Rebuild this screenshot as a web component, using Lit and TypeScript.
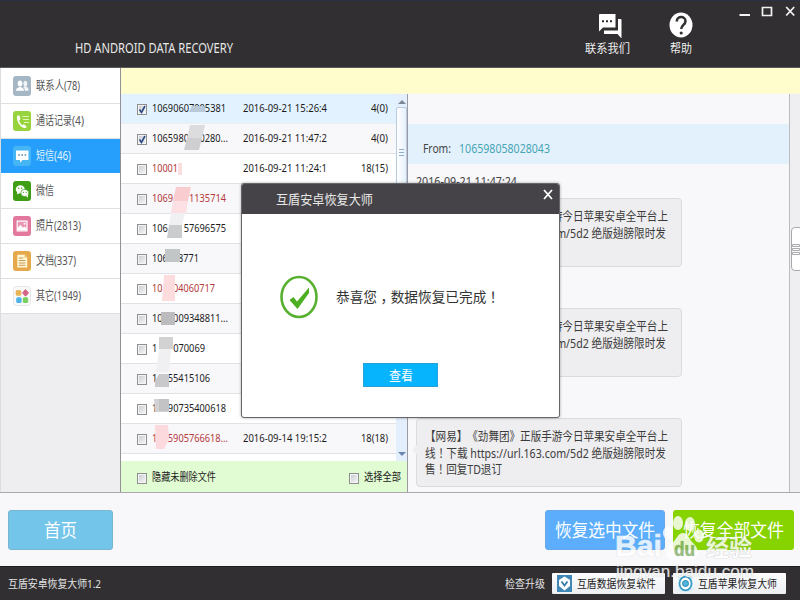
import { LitElement, html, svg, css } from "lit";
import { customElement, property } from "lit/decorators.js";
import { classMap } from "lit/directives/class-map.js";

/** One line of text condensed or widened to a given width. */
@customElement("fit-text")
class FitText extends LitElement {
  @property({ type: Number }) w = 0;
  @property() text = "";
  static styles = css`
    :host { display: inline-block; flex: none; white-space: pre; overflow: visible; text-spacing-trim: space-all; }
    .run { display: inline-block; transform-origin: 0 50%; }
    .mid { font-family: "Noto Sans CJK TC", sans-serif; line-height: 1; }
    .comma { position: relative; left: .25em; line-height: 1; }
  `;
  updated() {
    const s = this.renderRoot.querySelector(".run") as HTMLElement;
    s.style.transform = "none";
    const n = s.getBoundingClientRect().width;
    this.style.width = this.w + "px";
    if (n) s.style.transform = `scaleX(${this.w / n})`;
  }
  part1(p: string) {
    if (p === "！") return html`<span class="mid" lang="zh-TW">${p}</span>`;
    if (p === "，") return html`<span class="comma">${p}</span>`;
    return p;
  }
  render() {
    return html`<span class="run">${this.text.split(/([，！])/).map(p => this.part1(p))}</span>`;
  }
}

const t = (text: string, w: number, cls = "") => html`<fit-text class=${cls} .text=${text} .w=${w}></fit-text>`;

const G = "\u2007";
const rows: { n: string; w: number; on?: boolean; red?: boolean; date?: string; count?: string; cw?: number }[] = [
  { n: "10690607005381", w: 74, on: true, date: "2016-09-21 15:26:4", count: "4(0)", cw: 17 },
  { n: "1065980" + G + G + "0280...", w: 76, on: true, date: "2016-09-21 11:47:2", count: "4(0)", cw: 17 },
  { n: "10001", w: 26, red: true, date: "2016-09-21 11:24:1", count: "18(15)", cw: 27 },
  { n: "1069" + G + G + G + "1135714", w: 74, red: true },
  { n: "106" + G + G + G + "57696575", w: 74 },
  { n: "106" + G + G + "8771", w: 47 },
  { n: "10" + G + G + "04060717", w: 63, red: true },
  { n: "10" + G + G + "009348811...", w: 76 },
  { n: "1" + G + G + G + "070069", w: 53 },
  { n: "1" + G + G + "55415106", w: 58 },
  { n: "1" + G + G + "90735400618", w: 74 },
  { n: "1" + G + G + "5905766618...", w: 76, red: true, date: "2016-09-14 19:15:2", count: "18(18)", cw: 27 },
];

const icons = [
  svg`<rect width="18" height="20" rx="3" fill="#a5b6c5"/><g fill="#fff"><ellipse cx="7" cy="7.600" rx="2.300" ry="3"/><path d="M3 14.800c0-3 2-2.600 3.200-3.900h1.800c1.200 1.300 3 .9 3 3.900z"/><ellipse cx="12.300" cy="7.400" rx="2" ry="2.700" opacity=".85"/><path d="M11.800 14.800c0-2-.6-2.900-1.600-3.500l1.100-1h1.900c.9 1.300 2.500 1 2.500 4.500z" opacity=".85"/></g>`,
  svg`<rect width="18" height="20" rx="3" fill="#97d33c"/><path d="M4.300 4.500c-1.600 3.500 1.700 11 6.800 12.600 1.600.2 2.600-1 2.500-1.700l-2.800-2.200-1.600 1c-1.500-.8-2.800-3.300-3-5l1.300-1-1-3.700z" fill="#fff"/><path d="M9 5.500h7M10 8.500h6M11 11.500h5" stroke="#e3f6b8" stroke-width="1.200"/>`,
  svg`<rect width="18" height="20" rx="3" fill="#45b5f3"/><path d="M3 4.500h12.500v9.500H9.500L7 16.800V14H3z" fill="#fff"/><path d="M5.300 9h1.600M8.400 9H10M11.600 9h1.600" stroke="#5b8fb4" stroke-width="1.600"/>`,
  svg`<rect width="18" height="20" rx="3" fill="#3f9d16"/><ellipse cx="7.300" cy="8.300" rx="4.500" ry="4" fill="#fff"/><path d="M4.500 11l-.6 2.500 3-1.500z" fill="#fff"/><ellipse cx="11.800" cy="12" rx="4" ry="3.600" fill="#fff" stroke="#3f9d16" stroke-width=".7"/><path d="M13 15l2 1.700v-3z" fill="#fff"/><g fill="#3f9d16"><circle cx="5.700" cy="7.300" r=".7"/><circle cx="8.700" cy="7.300" r=".7"/><circle cx="10.500" cy="11.300" r=".6"/><circle cx="13.200" cy="11.300" r=".6"/></g>`,
  svg`<rect width="18" height="20" rx="3" fill="#e2789d"/><path d="M4.200 5.200h9.800v9.800H4.200z" fill="#e993b1" stroke="#fff" stroke-width="1.200"/><path d="M4.500 14.500V12l3-3.200 2.500 3 1.500-1.200 2.300 2v2z" fill="#fff"/><circle cx="11.500" cy="7.700" r="1" fill="#fff"/>`,
  svg`<rect width="18" height="20" rx="3" fill="#e5a94c"/><path d="M4.300 3.800h7.500l2.400 2.600v10.100H4.300z" fill="#fff6d5"/><path d="M11.500 3.800v3h2.700z" fill="#e8c06e"/><path d="M5.800 7h4.500M5.800 9.500h6.500M5.800 12h6.500M5.800 14.300h6.500" stroke="#c29a55"/>`,
  svg`<rect x=".5" y=".5" width="17" height="19" rx="3" fill="#fafafa" stroke="#e6e6e8"/><rect x="2.700" y="4" width="5.600" height="5.800" rx="1.500" fill="#e9b45a"/><path d="M12.500 3.600l3 3.300-3 3.300-3-3.300z" fill="#d56582" stroke="#d56582" stroke-linejoin="round"/><rect x="3.200" y="11.200" width="5.400" height="5.800" rx="1.500" fill="#4fb3e6"/><rect x="9.800" y="11.200" width="5.400" height="5.800" rx="1.500" fill="#79cf60"/>`,
];
const menu: [string, number, string, number][] = [
  ["联系人", 28, "(78)", 16], ["通话记录", 36, "(4)", 12], ["短信", 18, "(46)", 17], ["微信", 18, "", 0],
  ["照片", 18, "(2813)", 27], ["文档", 18, "(337)", 22], ["其它", 18, "(1949)", 27],
];

@customElement("app-root")
class AppRoot extends LitElement {
  static styles = css`
    :host { display: flex; flex-direction: column; position: relative; width: 800px; height: 600px; overflow: hidden; background: #f8f7fa;
      font-family: "Noto Sans", "Noto Sans CJK SC", sans-serif; font-size: 11px; line-height: 16px; color: #222; }
    * { box-sizing: border-box; }
    svg { display: block; flex: none; }
    header { height: 68px; flex: none; background: #312f31; border-top: 1px solid #273345; border-bottom: 1px solid #5a595b; display: flex; color: #eee; }
    .brand { margin: 38px 0 0 75px; font-size: 13.500px; line-height: 18px; color: #e8e8e8; width: 509px; }
    .tool { display: flex; flex-direction: column; align-items: center; gap: 3px; width: 46px; margin-top: 12px; font-size: 12px; }
    .tool + .tool { margin-left: 28px; margin-top: 11px; }
    .tool + .tool svg { margin-left: 0; }
    .tool svg { margin-left: 6px; }
    .win { margin: 5px 0 0 35px; }
    main { display: flex; height: 425px; flex: none; border-bottom: 1px solid #aaa9ad; }
    nav { width: 121px; background: #eeedf0; border-left: 1px solid #ddd; border-right: 1px solid #929296; flex: none; }
    .item { height: 35px; display: flex; align-items: center; padding: 0 0 0 12px; background: #fff; border-bottom: 1px solid #dfdfe2; color: #555; font-size: 12px; }
    .item svg { margin-right: 5px; }
    .item.sel { background: #259ffb; color: #e4f4ff; border-color: #fff; }
    .item:first-child { height: 36px; padding-top: 1px; }
    .work { flex: 1; display: flex; flex-direction: column; }
    .notice { height: 26px; background: #fffdcb; flex: none; border-bottom: 1px solid #fbf9dc; }
    .panes { display: flex; flex: 1; }
    .list { width: 287px; background: #fff; border-right: 1px solid #9b9ba1; display: flex; flex-direction: column; position: relative; }
    .body { display: flex; height: 367px; }
    .rows { width: 275px; }
    .row { height: 30px; padding: 0 8px 1px 16px; display: flex; align-items: center; border-bottom: 1px solid #e2e1e5; color: #1c1c1c; }
    .row:nth-child(even) { background: #f8f7fa; }
    .row:first-child { background: #e2f2fe; border-color: #eceff5; }
    .red { color: #b43a3c; }
    .num { width: 91px; margin-left: 5px; margin-top: -1px; display: flex; }
    .cnt { flex: 1; display: flex; justify-content: flex-end; }
    .box { width: 10px; height: 11px; border: 1px solid #8e8f8f; background: linear-gradient(135deg, #c6c9ce, #f8f8f8); box-shadow: inset 0 0 0 1px #f4f4f4; flex: none; margin-top: 2px; }
    .box svg { margin: -1px 0 0 -1px; }
    .bar { width: 11px; background: #e3effd; display: flex; flex-direction: column; align-items: center; }
    .thumb { width: 11px; height: 200px; border: 1px solid #b6cae0; border-radius: 2px; background: linear-gradient(90deg, #fff, #e6f0fb); margin-top: 3px; padding: 41px 2px 0; }
    .arrow { margin-top: 5px; }
    .down { margin-top: auto; margin-bottom: 4px; }
    .pick { height: 31px; background: #e1fcd3; padding: 1px 6px 0 16px; display: flex; align-items: center; color: #222; font-size: 11.500px; }
    .pick .b2 { margin-left: auto; }
    .pick fit-text { margin-left: 5px; }
    .mosaic { position: absolute; left: 0; top: 0; }
    .msgs { width: 382px; background: #f8f7fa; padding-top: 30px; border-right: 1px solid #bcbbc0; height: 398px; overflow: hidden; }
    .from { height: 40px; background: #e3f1fc; padding: 8px 0 0 15px; display: flex; align-items: center; gap: 8px; font-size: 13px; color: #444; }
    .teal { color: #47a5b5; }
    .msg { height: 110px; padding: 10px 0 0 8px; position: relative; }
    .msg > fit-text { display: block; font-size: 12px; color: #444; height: 16px; }
    .bubble { width: 266px; height: 69px; margin-top: 8px; border: 1px solid #dbdadd; border-radius: 4px; background: #eeedef; padding: 10px 0 0 8px; display: flex; flex-direction: column; color: #3c3c3c; font-size: 12.500px; line-height: 16.500px; }
    .tail { position: absolute; left: 4px; top: 60px; }
    .track { flex: 1; background: #efeef1; }
    .grip { width: 12px; height: 44px; margin-top: 133px; margin-left: 1px; border: 1px solid #aaa9ad; border-radius: 4px; background: #fff; padding: 16px 0 0 0; }
    .actions { height: 73px; flex: none; display: flex; padding: 17px 6px 0 8px; }
    .btn { height: 40px; border-radius: 3px; display: flex; align-items: center; justify-content: center; color: #fff; font-size: 18px; line-height: 26px; }
    .home { width: 105px; background: #73c5ea; border: 1px solid #7ab5d0; margin-right: auto; }
    .selb { width: 120px; background: #5caefd; border: 1px solid #68a7e8; margin-right: 8px; }
    .allb { width: 121px; background: #87d300; }
    footer { flex: 1; background: #312f31; border-top: 1px solid #1c1b1d; display: flex; align-items: center; padding: 0 14px 0 8px; color: #e3e3e3; }
    footer .up { margin-left: auto; margin-right: 7px; }
    .link { height: 21px; width: 113px; background: linear-gradient(#fdfdfe, #eceef2); display: flex; align-items: center; gap: 5px; padding-left: 5px; color: #222; border-radius: 1px; }
    .link + .link { margin-left: 8px; }
    .dialog { position: absolute; left: 241px; top: 183px; width: 319px; height: 235px; background: #fff; border: 1px solid #66656a; border-radius: 3px; box-shadow: 0 0 3px #0005; overflow: hidden; }
    .title { height: 30px; background: #454347; color: #e8e8e8; display: flex; justify-content: space-between; align-items: center; padding: 0 6px 0 34px; font-size: 13px; }
    .title svg { margin-top: -10px; }
    .done { display: flex; align-items: center; gap: 17px; margin: 61px 0 0 37px; font-size: 14px; line-height: 20px; color: #333; }
    .view { width: 75px; height: 24px; margin: 44px 0 0 121px; background: #06b4fd; border: 1px solid #25a1dc; color: #fff; display: flex; align-items: center; justify-content: center; font-size: 13px; }
    .mark { position: absolute; left: 612px; top: 513px; width: 150px; color: #fff; opacity: .82; font-family: "Liberation Sans", "Noto Sans CJK SC", sans-serif; text-shadow: 0 0 1px #999; }
    .mark .line { display: flex; align-items: flex-end; height: 47px; font-size: 30px; line-height: 28px; font-weight: 700; padding-left: 3px; -webkit-text-stroke: .6px #fff; }
    .mark .cn { font-size: 23px; line-height: 24px; margin-left: 1px; -webkit-text-stroke: 0; }
    .mark .paw { -webkit-text-stroke: 0; }
    .mark .url { font-size: 17px; line-height: 18px; margin: 3px 0 0 4px; display: block; }
  `;

  box(on = false) {
    return html`<div class="box">${on ? html`<svg width="10" height="11"><path d="M2.500 5.500l2 3 3.500-6.500" fill="none" stroke="#2c4a86" stroke-width="1.600"/></svg>` : ""}</div>`;
  }

  message() {
    return html`<div class="msg">${t("2016-09-21 11:47:24", 101)}
      <div class="bubble">${t("【网易】《劲舞团》正版手游今日苹果安卓全平台上", 243)}${t("线！下载 https://url.163.com/5d2 绝版翅膀限时发", 241)}${t("售！回复TD退订", 77)}</div>
      <svg class="tail" width="6" height="12"><path d="M6 0v12L0 6z" fill="#eeedef"/></svg></div>`;
  }

  render() {
    return html`
      <header>
        <div class="brand">${t("HD ANDROID DATA RECOVERY", 158)}</div>
        <div class="tool">
          <svg width="24" height="25" viewBox="0 0 24 25" fill="#fff"><path d="M2 1h15.500v13.500H5L1 18.500V2q0-1 1-1z"/><path d="M20 6h2.500q1 0 1 1v18.500L19.500 21H6v-3.500h14z"/><path d="M4 7.200h2v2H4zM8 7.200h2v2H8zM12 7.200h2v2h-2z" fill="#312f31"/></svg>
          ${t("联系我们", 45)}
        </div>
        <div class="tool">
          <svg width="24" height="26" viewBox="0 0 24 26"><ellipse cx="12" cy="13" rx="11.500" ry="12.500" fill="#fff"/><path d="M7.800 9.500c0-6 8.700-5.700 8.700-.3 0 3.500-4.300 4-4.300 7.800" fill="none" stroke="#312f31" stroke-width="2.500"/><circle cx="12.200" cy="21" r="1.600" fill="#312f31"/></svg>
          ${t("帮助", 22)}
        </div>
        <svg class="win" width="60" height="16" fill="none" stroke="#f2f2f2"><path d="M.5 9h10.500" stroke-width="2"/><path d="M23.500 1.500h9v8h-9z" stroke-width="1.700"/><path d="M47.200 1l8 8.500M55.200 1l-8 8.500" stroke-width="1.800"/></svg>
      </header>
      <main>
        <nav>${menu.map(([l, w, c, cw], i) => html`<div class=${classMap({ item: true, sel: i === 2 })}><svg width="18" height="20">${icons[i]}</svg>${t(l, w)}${c ? t(c, cw) : ""}</div>`)}</nav>
        <div class="work">
          <div class="notice"></div>
          <div class="panes">
            <section class="list">
              <div class="body">
                <div class="rows">${rows.map(r => html`<div class="row">${this.box(r.on)}
                  <div class=${classMap({ num: true, red: !!r.red })}>${t(r.n, r.w)}</div>
                  ${r.date ? html`${t(r.date, 84)}<div class="cnt">${t(r.count!, r.cw!)}</div>` : ""}</div>`)}</div>
                <div class="bar">
                  <svg class="arrow" width="8" height="5"><path d="M0 5l4-4 4 4z" fill="#7d8794"/></svg>
                  <div class="thumb"><svg width="5" height="8"><path d="M0 .5h5M0 3.500h5M0 6.500h5" stroke="#8fb0ca"/></svg></div>
                  <svg class="down" width="8" height="5"><path d="M0 0l4 4 4-4z" fill="#6c85b0"/></svg>
                </div>
              </div>
              <div class="pick">${this.box()}${t("隐藏未删除文件", 64)}<div class="b2">${this.box()}</div>${t("选择全部", 37)}</div>
              <svg class="mosaic" width="120" height="368">
                <path d="M71 12l12 0 2 6h-17z" fill="#b9c9d8"/>
                <path d="M69 31h15l-3 13H66z" fill="#dcdbde"/><path d="M66 44h15l-3 12H63z" fill="#cfced1"/>
                <path d="M57 69h4v12h-4z" fill="#fbdfe0"/>
                <path d="M55 93h15l-3 14H52z" fill="#f9ccd0"/><path d="M52 107h15l-2 12H50z" fill="#fde0e3"/><path d="M50 119h14l-3 12H48z" fill="#f0eff2"/>
                <path d="M48 131h13v13H46z" fill="#cbcccd"/>
                <path d="M44 155h15v13H44z" fill="#c2c6c6"/>
                <path d="M43 181h11v26H41z" fill="#fddcdd"/>
                <path d="M40 218h14v13H40z" fill="#bcbcbf"/>
                <path d="M38 243h14v12H38z" fill="#d2d2d2"/><path d="M38 255h12l-2 23H35z" fill="#f0eff2"/>
                <path d="M38 280h10v13H34v-6z" fill="#c9c9cb"/><path d="M33 305h15v13H34z" fill="#d2d1d3"/><path d="M38 305h10v12H38z" fill="#c3c3c5"/>
                <path d="M34 331h13l1 14-5 10h-8z" fill="#fcd9dc"/>
              </svg>
            </section>
            <section class="msgs">
              <div class="from">${t("From:", 28)}${t("106598058028043", 91, "teal")}</div>
              ${this.message()}${this.message()}${this.message()}
            </section>
            <div class="track"><div class="grip"><svg width="8" height="12" fill="#fff" stroke="#aaa9ad"><path d="M.5 .5h7v2h-7zM.5 4.500h7v2h-7zM.5 8.500h7v2h-7z"/></svg></div></div>
          </div>
        </div>
      </main>
      <div class="actions">
        <div class="btn home">${t("首页", 33)}</div>
        <div class="btn selb">${t("恢复选中文件", 100)}</div>
        <div class="btn allb">${t("恢复全部文件", 101)}</div>
      </div>
      <footer>
        ${t("互盾安卓恢复大师1.2", 93)}
        ${t("检查升级", 40, "up")}
        <div class="link"><svg width="15" height="17"><path d="M0 0h15v17H0z" fill="#4087b5"/><path d="M2 5l5.500-3.500L13 5v6l-5.500 4.500L2 11z" fill="#fff"/><path d="M4.500 6.500l3 4 3-4" fill="none" stroke="#327ba9" stroke-width="1.800"/></svg>${t("互盾数据恢复软件", 79)}</div>
        <div class="link"><svg width="15" height="17"><rect width="15" height="17" rx="4" fill="#dceef6"/><ellipse cx="7.500" cy="8.500" rx="6" ry="6.800" fill="#fff" stroke="#3c9bc6" stroke-width="1.800"/><circle cx="7.500" cy="8.500" r="3" fill="#50b5dd" stroke="#2a83b0"/></svg>${t("互盾苹果恢复大师", 79)}</div>
      </footer>
      <div class="dialog">
        <div class="title">${t("互盾安卓恢复大师", 97)}<svg width="10" height="11" stroke="#fff" stroke-width="1.800"><path d="M1 1l8 9M9 1l-8 9"/></svg></div>
        <div class="done">
          <svg width="40" height="44"><ellipse cx="20" cy="22" rx="17.500" ry="20" fill="#fff" stroke="#58b030" stroke-width="2.600"/><path d="M10.500 25l4-3 3.500 4.500 12-14v5.500L18.500 34z" fill="#4caf21"/></svg>
          ${t("恭喜您，数据恢复已完成！", 164)}
        </div>
        <div class="view">${t("查看", 24)}</div>
      </div>
      <div class="mark">
        <div class="line">${t("Bai", 47)}
          <svg class="paw" width="43" height="46" viewBox="0 0 43 46" fill="#fff"><ellipse cx="6" cy="19" rx="5" ry="6.500"/><ellipse cx="16" cy="9" rx="5" ry="7"/><ellipse cx="28" cy="10" rx="5" ry="7"/><ellipse cx="37" cy="22" rx="5" ry="6.500"/><path d="M21 19c5 0 6 6 10 10 6 5 8 17-3 17H12C2 46 3 34 10 29c5-4 6-10 11-10z"/><text x="12" y="42" font-size="20" font-weight="700" fill="#85b36a" textLength="21" lengthAdjust="spacingAndGlyphs">du</text></svg>
          ${t("经验", 46, "cn")}
        </div>
        ${t("jingyan.baidu.com", 138, "url")}
      </div>`;
  }
}
